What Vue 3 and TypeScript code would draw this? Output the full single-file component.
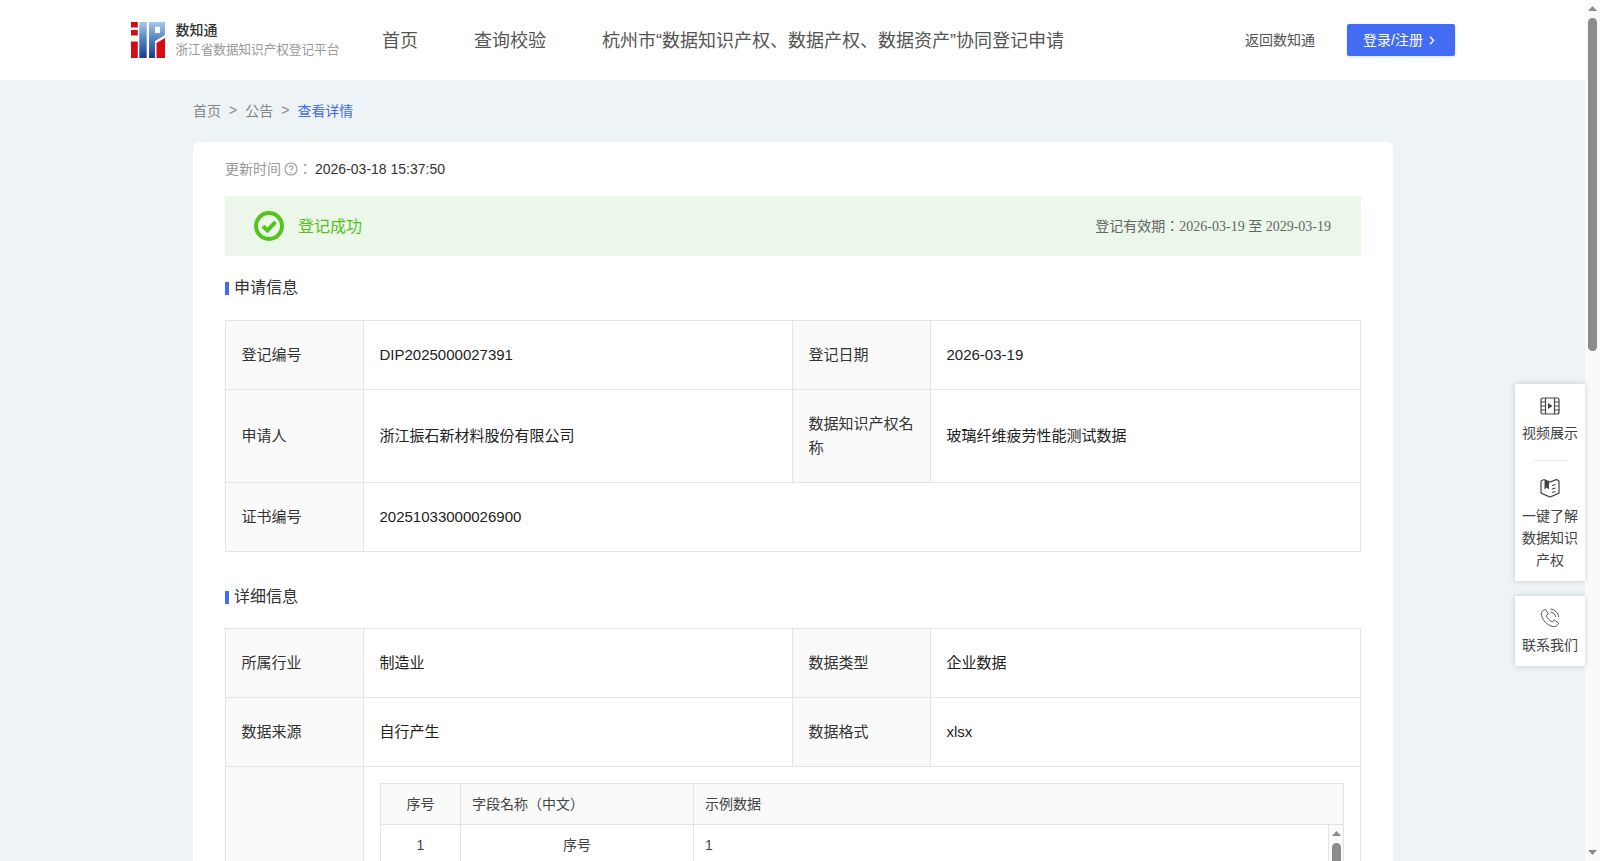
<template>
  <div class="page">
    <div class="viewport">
      <header class="topbar">
        <div class="topbar-inner">
          <div class="brand">
            <svg class="logo" viewBox="0 0 34 36" aria-hidden="true">
              <defs>
                <linearGradient id="logoBlue" x1="0" y1="0" x2="0" y2="1">
                  <stop offset="0" stop-color="#a9c8ea" />
                  <stop offset="0.5" stop-color="#4f7fc0" />
                  <stop offset="1" stop-color="#1d3a8c" />
                </linearGradient>
              </defs>
              <rect x="0" y="0" width="6.800" height="5.500" fill="#d50c12" />
              <rect x="0" y="8" width="6.800" height="5.500" fill="#d50c12" />
              <rect x="0" y="19.500" width="6.800" height="16.500" fill="#d50c12" />
              <rect x="8.300" y="0" width="7.400" height="36" fill="url(#logoBlue)" />
              <path d="M18 0H34V13L24 19V36H18Z" fill="url(#logoBlue)" />
              <rect x="24" y="4.700" width="5" height="6.300" fill="#fff" />
              <path d="M25.500 21 34 16V36H25.500Z" fill="#d50c12" />
            </svg>
            <div class="brand-text">
              <div class="brand-name">数知通</div>
              <div class="brand-sub">浙江省数据知识产权登记平台</div>
            </div>
          </div>
          <nav class="nav">
            <a v-for="item in navItems" :key="item">{{ item }}</a>
          </nav>
          <div class="actions">
            <a class="back-link">返回数知通</a>
            <button class="login" type="button">
              <span class="login-text">登录/注册</span>
              <svg viewBox="0 0 6 9" class="chevron"><path d="M1 .8 4.600 4.500 1 8.200" /></svg>
            </button>
          </div>
        </div>
      </header>

      <main class="main">
        <div class="crumbs">
          <span>首页</span><i>&gt;</i><span>公告</span><i>&gt;</i><span class="current">查看详情</span>
        </div>

        <section class="card">
          <div class="updated">
            <span class="updated-label">更新时间</span>
            <svg class="help" viewBox="0 0 14 14">
              <circle cx="7" cy="7" r="6" />
              <path d="M5.200 5.500a1.800 1.800 0 1 1 2.800 1.500c-.7.4-1 .8-1 1.500" />
              <circle class="dot" cx="7" cy="10.400" r=".7" />
            </svg>
            <span class="updated-label">：</span>
            <span class="updated-value">2026-03-18 15:37:50</span>
          </div>

          <div class="status">
            <div class="status-left">
              <svg class="status-icon" viewBox="0 0 30 30">
                <circle cx="15" cy="15" r="13" />
                <path d="M9 15.200 13.400 19.400 21.400 11.200" />
              </svg>
              <span class="status-text">登记成功</span>
            </div>
            <div class="status-right">登记有效期：2026-03-19 至 2029-03-19</div>
          </div>

          <h3 class="section-title">申请信息</h3>
          <table class="info">
            <colgroup>
              <col class="c-label" /><col class="c-value" /><col class="c-label" /><col />
            </colgroup>
            <tbody>
              <tr>
                <th>登记编号</th><td>DIP2025000027391</td>
                <th>登记日期</th><td>2026-03-19</td>
              </tr>
              <tr>
                <th>申请人</th><td>浙江振石新材料股份有限公司</td>
                <th>数据知识产权名称</th><td>玻璃纤维疲劳性能测试数据</td>
              </tr>
              <tr>
                <th>证书编号</th><td colspan="3">20251033000026900</td>
              </tr>
            </tbody>
          </table>

          <h3 class="section-title second">详细信息</h3>
          <table class="info">
            <colgroup>
              <col class="c-label" /><col class="c-value" /><col class="c-label" /><col />
            </colgroup>
            <tbody>
              <tr>
                <th>所属行业</th><td>制造业</td>
                <th>数据类型</th><td>企业数据</td>
              </tr>
              <tr>
                <th>数据来源</th><td>自行产生</td>
                <th>数据格式</th><td>xlsx</td>
              </tr>
              <tr>
                <th></th>
                <td colspan="3" class="nested-cell">
                  <div class="sample">
                    <div class="sample-row sample-head">
                      <div class="center">序号</div>
                      <div>字段名称（中文）</div>
                      <div>示例数据</div>
                    </div>
                    <div class="sample-body">
                      <div class="sample-rows">
                        <div v-for="row in sampleRows" :key="row.no" class="sample-row">
                          <div class="center">{{ row.no }}</div>
                          <div class="center">{{ row.name }}</div>
                          <div>{{ row.value }}</div>
                        </div>
                      </div>
                      <div class="mini-bar">
                        <svg class="mini-arrow" viewBox="0 0 9 5"><path d="M4.500 0 9 5H0Z" /></svg>
                        <div class="mini-thumb"></div>
                      </div>
                    </div>
                  </div>
                </td>
              </tr>
            </tbody>
          </table>
        </section>
      </main>
    </div>

    <!-- page scrollbar -->
    <div class="scrollbar">
      <svg class="arrow" viewBox="0 0 9 5"><path d="M4.500 0 9 5H0Z" /></svg>
      <div class="thumb"></div>
      <svg class="arrow down" viewBox="0 0 9 5"><path d="M0 0H9L4.500 5Z" /></svg>
    </div>

    <aside class="float">
      <div class="float-box">
        <div class="float-item film-item">
          <svg viewBox="0 0 20 18" class="float-icon">
            <rect x="1" y="1" width="18" height="16" rx="2" />
            <path d="M5.500 1V17M14.500 1V17M1 5H5.500M1 9H5.500M1 13H5.500M14.500 5H19M14.500 9H19M14.500 13H19" />
            <path class="solid" d="M8 6 12.500 9 8 12Z" />
          </svg>
          <span>视频展示</span>
        </div>
        <div class="float-divider"></div>
        <div class="float-item book-item">
          <svg viewBox="0 0 20 20" class="float-icon">
            <path d="M4 1.500 10 4 16.500 1.500 19 3V15L10 19 1 15V3L4 1.500" />
            <path d="M12 7.500 15.500 6.500M12 11 15.500 10M12 14.500 15.500 13.500" />
            <path class="solid" d="M4.500 2 9 4V11.500L6.800 9.500 4.500 11.500Z" />
          </svg>
          <span>一键了解<br />数据知识<br />产权</span>
        </div>
      </div>
      <div class="float-box">
        <div class="float-item phone-item">
          <svg viewBox="0 0 20 20" class="float-icon thin">
            <path d="M5.500 1.500C3 2 .8 4 1.500 7.500C2.800 12.500 7.500 17.300 12.500 18.500C15.500 19.200 17.800 17.500 18.500 15.200L14.500 12 12.300 13.800C9.800 12.800 7.200 10.200 6.200 7.700L8.300 5.800Z" />
            <path d="M10.500 1C14.500 1.300 18.200 4.800 18.800 9M10.500 4C13 4.300 15.300 6.300 15.800 9" />
          </svg>
          <span>联系我们</span>
        </div>
      </div>
    </aside>
  </div>
</template>

<script setup lang="ts">
const navItems: string[] = [
  '首页',
  '查询校验',
  '杭州市“数据知识产权、数据产权、数据资产”协同登记申请',
]

interface SampleRow {
  no: number
  name: string
  value: string
}

const sampleRows: SampleRow[] = [{ no: 1, name: '序号', value: '1' }]
</script>

<style>
html,
body {
  margin: 0;
  background: #eef3f6;
}
</style>

<style scoped>
.page {
  position: relative;
  height: 100vh;
  display: flex;
  overflow: hidden;
  background: #eef3f6;
  font-family: "Liberation Sans", "Noto Sans CJK JP", sans-serif;
  color: #222;
}

.viewport {
  flex: 1;
  min-width: 0;
  overflow: hidden;
}

/* page scrollbar */
.scrollbar {
  width: 15px;
  flex: none;
  background: #fafafa;
  display: flex;
  flex-direction: column;
  align-items: center;
  padding: 6px 0;
  box-sizing: border-box;
}

.arrow {
  width: 9px;
  height: 5px;
  fill: #8c8c8c;
  flex: none;
}

.arrow.down {
  margin-top: auto;
}

.thumb {
  width: 9px;
  height: 333px;
  margin-top: 7px;
  border-radius: 5px;
  background: #8c8c8c;
}

/* header */
.topbar {
  height: 80px;
  background: #fff;
}

.topbar-inner {
  width: 1324px;
  height: 100%;
  margin-left: 131px;
  display: flex;
  align-items: center;
}

.brand {
  display: flex;
  align-items: center;
  gap: 10.500px;
  width: 251px;
}

.logo {
  width: 34px;
  height: 36px;
}

.brand-name {
  font-size: 14px;
  line-height: 20px;
  font-weight: 500;
  color: #333;
}

.brand-sub {
  font-size: 12.600px;
  line-height: 20px;
  color: #999;
}

.nav {
  display: flex;
  gap: 56px;
  padding-bottom: 2px;
  font-size: 18px;
  color: #555;
}

.actions {
  margin-left: auto;
  display: flex;
  align-items: center;
  gap: 32px;
}

.back-link {
  padding-bottom: 2px;
  font-size: 14px;
  color: #555;
}

.login {
  width: 108px;
  height: 32px;
  padding: 0 0 0 16px;
  border: 0;
  border-radius: 2px;
  background: #436cf4;
  color: #fff;
  font: inherit;
  font-size: 14px;
  box-shadow: 0 1px 3px rgba(67, 108, 244, 0.25);
  display: flex;
  align-items: center;
  gap: 6px;
}

.login-text {
  padding-bottom: 2px;
}

.chevron {
  width: 6px;
  height: 9px;
  fill: none;
  stroke: #fff;
  stroke-width: 1.300;
}

/* breadcrumb */
.main {
  width: 1200px;
  margin-left: 193px;
}

.crumbs {
  height: 62px;
  padding-bottom: 2px;
  box-sizing: border-box;
  display: flex;
  align-items: center;
  font-size: 14px;
  color: #888;
}

.crumbs i {
  font-style: normal;
  margin: 0 8px;
}

.crumbs .current {
  color: #436cf4;
}

/* card */
.card {
  background: #fff;
  border-radius: 6px;
  padding: 0 32px 40px;
}

.updated {
  height: 54px;
  display: flex;
  align-items: center;
  font-size: 14px;
  color: #333;
}

.updated-label {
  padding-bottom: 2px;
  color: #999;
}

.updated-value {
  margin-left: 3px;
}

.help {
  width: 14px;
  height: 14px;
  margin-left: 3px;
  fill: none;
  stroke: #999;
  stroke-width: 1.100;
}

.help .dot {
  fill: #999;
  stroke: none;
}

.status {
  height: 60px;
  background: #ebf7e8;
  display: flex;
  align-items: center;
  justify-content: space-between;
  padding: 0 30px 0 29px;
}

.status-left {
  display: flex;
  align-items: center;
  gap: 14px;
  font-size: 16px;
  color: #52c41a;
}

.status-text {
  padding-bottom: 3px;
}

.status-icon {
  width: 30px;
  height: 30px;
  fill: none;
  stroke: #52c41a;
  stroke-width: 4;
}

.status-right {
  padding-bottom: 3px;
  font-family: "Liberation Serif", "Noto Sans CJK JP", serif;
  font-size: 14px;
  color: #666;
}

.section-title {
  margin: 22px 0;
  height: 20px;
  font-size: 16px;
  font-weight: 400;
  line-height: 20px;
  color: #333;
  display: flex;
  align-items: center;
  gap: 5px;
}

.section-title::before {
  content: "";
  width: 4px;
  height: 13px;
  background: #436cf4;
}

.section-title.second {
  margin: 35px 0 21px;
}

/* info tables */
.info {
  width: 100%;
  table-layout: fixed;
  border-collapse: collapse;
  font-size: 15px;
  color: #222;
}

.c-label {
  width: 138px;
}

.c-value {
  width: 429px;
}

.info th,
.info td {
  border: 1px solid #e4e4e4;
  padding: 22px 15.500px;
  line-height: 24px;
  text-align: left;
  font-weight: 400;
}

.info th {
  background: #fafafa;
  color: #333;
}

.info .nested-cell {
  padding: 16px;
  vertical-align: top;
}

/* sample table */
.sample {
  border: 1px solid #e4e4e4;
  border-bottom: 0;
  font-size: 14px;
  color: #444;
}

.sample-row {
  display: grid;
  grid-template-columns: 79px 233px 1fr;
  height: 40px;
}

.sample-row > div {
  display: flex;
  align-items: center;
  padding: 0 11px;
  border-left: 1px solid #e4e4e4;
}

.sample-row > div:first-child {
  border-left: 0;
}

.sample-row .center {
  justify-content: center;
}

.sample-head {
  background: #fafafa;
  border-bottom: 1px solid #e4e4e4;
}

.sample-body {
  height: 300px;
  display: flex;
}

.sample-rows {
  flex: 1;
  min-width: 0;
}

.mini-bar {
  width: 15px;
  flex: none;
  box-sizing: border-box;
  border-left: 1px solid #e4e4e4;
  background: #fafafa;
  display: flex;
  flex-direction: column;
  align-items: center;
  padding-top: 6px;
}

.mini-arrow {
  width: 9px;
  height: 5px;
  fill: #8c8c8c;
  flex: none;
}

.mini-thumb {
  width: 9px;
  height: 80px;
  margin-top: 7px;
  border-radius: 5px;
  background: #8c8c8c;
}

/* floating side tools */
.float {
  position: absolute;
  top: 384px;
  right: 15px;
  width: 70px;
  display: flex;
  flex-direction: column;
  gap: 15px;
}

.float-box {
  background: #fff;
  box-shadow: 0 0 6px rgba(0, 0, 0, 0.18);
}

.float-item {
  display: flex;
  flex-direction: column;
  align-items: center;
  gap: 6px;
  font-size: 14px;
  line-height: 22px;
  color: #444;
  text-align: center;
}

.film-item {
  padding: 12px 0 9px;
}

.book-item {
  padding: 17px 0 10px;
  gap: 7px;
}

.phone-item {
  padding: 12px 0 10px;
}

.float-divider {
  width: 32px;
  height: 1px;
  margin: 7px auto 0;
  background: #e6e6e6;
}

.float-icon {
  width: 20px;
  height: 20px;
  fill: none;
  stroke: #444;
  stroke-width: 1.200;
}

.float-icon.thin {
  stroke-width: 0.900;
}

.float-icon .solid {
  fill: #444;
  stroke: none;
}
</style>
